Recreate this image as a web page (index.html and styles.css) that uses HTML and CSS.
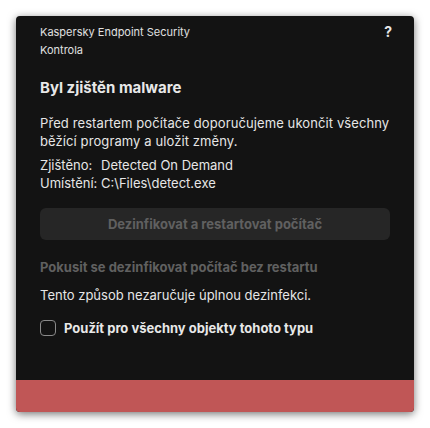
FILE: index.html
```html
<!DOCTYPE html>
<html lang="cs">
<head>
<meta charset="utf-8">
<link rel="stylesheet" href="styles.css">
</head>
<body>
<div class="card">
  <div class="content">
    <div class="header">
      <div class="app">
        <div>Kaspersky Endpoint Security</div>
        <div>Kontrola</div>
      </div>
      <div class="help">?</div>
    </div>
    <h1 class="title">Byl zjištěn malware</h1>
    <p class="text">Před restartem počítače doporučujeme ukončit všechny běžící programy a uložit změny.</p>
    <div class="details">
      <span>Zjištěno:</span><span>Detected On Demand</span>
      <span>Umístění:</span><span>C:\Files\detect.exe</span>
    </div>
    <div class="button">Dezinfikovat a restartovat počítač</div>
    <div class="link">Pokusit se dezinfikovat počítač bez restartu</div>
    <p class="note">Tento způsob nezaručuje úplnou dezinfekci.</p>
    <label class="check"><span class="box"></span><span>Použít pro všechny objekty tohoto typu</span></label>
  </div>
  <div class="footer"></div>
</div>
</body>
</html>
```
FILE: styles.css
```css
html, body { margin: 0; padding: 0; background: #ffffff; }
body { font-family: Inter, "Noto Sans", sans-serif; }
.card {
  margin: 16px;
  width: 398px;
  height: 396px;
  background: #131313;
  border-radius: 4px;
  box-shadow: 0 2px 8px rgba(0,0,0,0.55);
  display: flex;
  flex-direction: column;
  overflow: hidden;
}
.content { flex: 1; padding: 7px 24px 0 24px; color: #e6e6e6; }
.header { display: flex; justify-content: space-between; }
.app { font-size: 11px; line-height: 18px; color: #e0e0e0; }
.help { font-size: 14px; font-weight: 700; line-height: 18px; margin-right: -2px; color: #e8e8e8; }
.title { margin: 18px 0 0 0; font-size: 15px; line-height: 22px; font-weight: 700; color: #e8e8e8; }
.text { margin: 15px 0 0 0; font-size: 13px; line-height: 18px; letter-spacing: 0.1px; }
.details { margin-top: 6px; display: grid; grid-template-columns: 61px auto; font-size: 13px; line-height: 18px; }
.button {
  margin-top: 16px;
  height: 32px;
  border-radius: 6px;
  background: #262626;
  color: #606060;
  font-size: 13px;
  font-weight: 700;
  display: flex;
  align-items: center;
  justify-content: center;
}
.link { margin-top: 18px; font-size: 13px; line-height: 18px; font-weight: 700; color: #606060; }
.note { margin: 10px 0 0 0; font-size: 13px; line-height: 18px; }
.check { margin-top: 15px; display: flex; align-items: center; gap: 8px; font-size: 13px; line-height: 18px; font-weight: 700; color: #e8e8e8; }
.box { width: 14px; height: 14px; border: 1px solid #8a8a8a; border-radius: 4px; }
.footer { height: 32px; background: #c05656; }
```
